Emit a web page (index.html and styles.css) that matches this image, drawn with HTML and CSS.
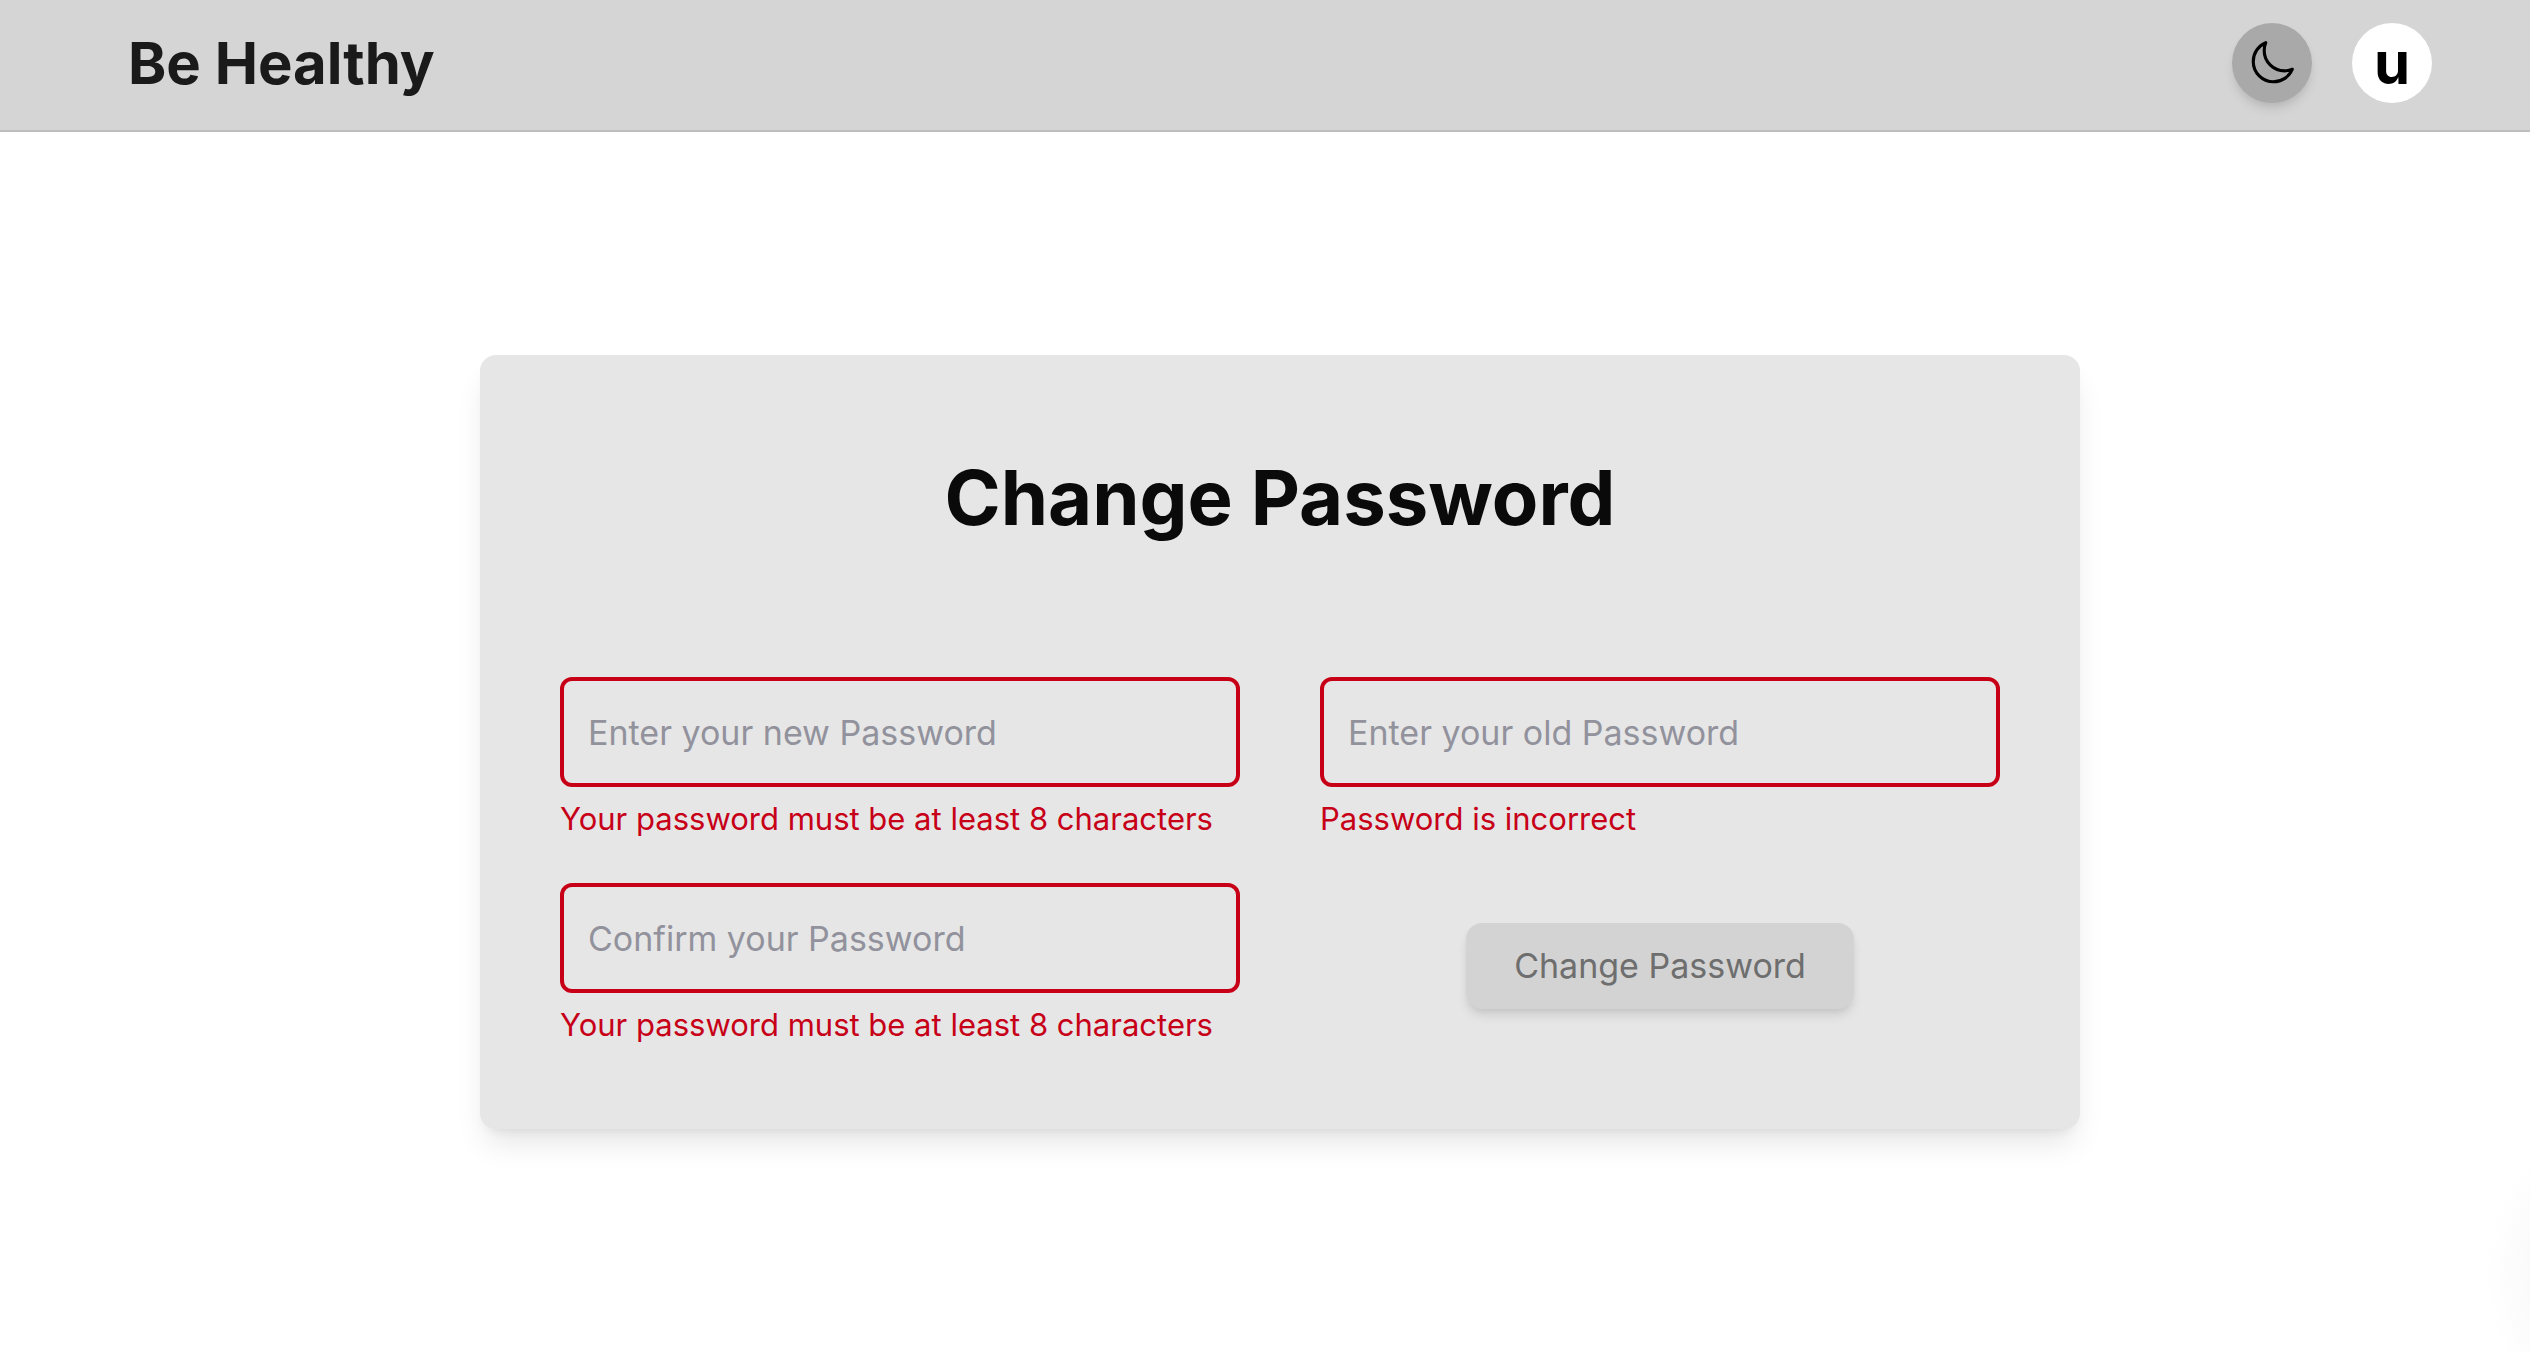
FILE: index.html
```html
<!DOCTYPE html>
<html lang="en">
<head>
    <meta charset="UTF-8">
    <meta name="viewport" content="width=device-width, initial-scale=1.0">
    <title>Change Password | Be Healthy</title>
    <link rel="stylesheet" href="styles.css">
</head>
<body>
    <header class="navbar">
        <a class="brand" href="#">Be Healthy</a>
        <div class="nav-actions">
            <button class="theme-toggle" type="button" aria-label="Toggle dark mode">
                <svg viewBox="0 0 24 24" fill="none" stroke="currentColor" stroke-width="1.5" stroke-linecap="round" stroke-linejoin="round">
                    <path d="M21.752 15.002A9.72 9.72 0 0 1 18 15.75c-5.385 0-9.75-4.365-9.75-9.75 0-1.33.266-2.597.748-3.752A9.753 9.753 0 0 0 3 11.25C3 16.635 7.365 21 12.75 21a9.753 9.753 0 0 0 9.002-5.998Z"/>
                </svg>
            </button>
            <button class="avatar" type="button">u</button>
        </div>
    </header>

    <main class="main-content">
        <form class="card">
            <h1>Change Password</h1>
            <div class="form-grid">
                <div class="field">
                    <input type="password" id="new-password" placeholder="Enter your new Password" aria-label="New password">
                    <label class="error" for="new-password">Your password must be at least 8 characters</label>
                </div>
                <div class="field">
                    <input type="password" id="old-password" placeholder="Enter your old Password" aria-label="Old password">
                    <label class="error" for="old-password">Password is incorrect</label>
                </div>
                <div class="field">
                    <input type="password" id="confirm-password" placeholder="Confirm your Password" aria-label="Confirm password">
                    <label class="error" for="confirm-password">Your password must be at least 8 characters</label>
                </div>
                <button class="submit" type="submit" disabled>Change Password</button>
            </div>
        </form>
    </main>
</body>
</html>
```
FILE: styles.css
```css
:root {
    --navbar: #d5d5d5;
    --navbar-border: #bebebe;
    --card: #e6e6e6;
    --error: #c70018;
    --placeholder: #92929d;
}

* {
    box-sizing: border-box;
}

body {
    font-family: Inter, sans-serif;
    margin: 0;
    min-height: 100vh;
    display: flex;
    flex-direction: column;
    background: radial-gradient(circle at calc(100% + 132px) calc(100% - 77px), #fafafa 130px, #fff 176px);
}

button,
input {
    font-family: inherit;
}

.navbar {
    display: flex;
    justify-content: space-between;
    align-items: center;
    padding: 23px 98px 27px 128px;
    background-color: var(--navbar);
    border-bottom: 2px solid var(--navbar-border);
}

.brand {
    font-size: 58px;
    line-height: 80px;
    font-weight: 700;
    color: #1a1a1a;
    text-decoration: none;
}

.nav-actions {
    display: flex;
    gap: 40px;
}

.theme-toggle,
.avatar {
    width: 80px;
    height: 80px;
    padding: 0;
    border: none;
    border-radius: 50%;
    display: flex;
    justify-content: center;
    align-items: center;
    color: #000;
    cursor: pointer;
}

.theme-toggle {
    background-color: #a9a9a9;
    box-shadow: 0 8px 12px -2px rgba(0,0,0,0.1), 0 4px 8px -4px rgba(0,0,0,0.1);
}

.theme-toggle svg {
    width: 50px;
    height: 50px;
}

.avatar {
    background-color: #fff;
    font-size: 58px;
    line-height: 80px;
    font-weight: 700;
}

.main-content {
    flex: 1;
    display: flex;
    justify-content: center;
    align-items: center;
    padding: 40px 0 40px 30px;
}

.card {
    width: 100%;
    max-width: 1600px;
    padding: 80px;
    border-radius: 16px;
    background-color: var(--card);
    box-shadow: 0 20px 30px -6px rgba(0,0,0,0.1), 0 8px 12px -8px rgba(0,0,0,0.1);
}

.card h1 {
    margin: 0 0 118px;
    font-size: 76px;
    line-height: 124px;
    font-weight: 700;
    text-align: center;
    color: #0a0a0a;
}

.form-grid {
    display: grid;
    grid-template-columns: repeat(2, 1fr);
    gap: 40px 80px;
    align-items: center;
}

.field {
    display: flex;
    flex-direction: column;
    gap: 8px;
}

.field input {
    width: 100%;
    height: 110px;
    padding: 0 24px;
    border: 4px solid var(--error);
    border-radius: 12px;
    background: transparent;
    font-size: 34px;
    outline: none;
}

.field input::placeholder {
    color: var(--placeholder);
    opacity: 1;
}

.error {
    font-size: 31px;
    line-height: 48px;
    color: var(--error);
}

.submit {
    justify-self: center;
    padding: 16px 48px;
    border: none;
    border-radius: 16px;
    background-color: #d3d3d3;
    font-size: 34px;
    line-height: 54px;
    color: #6e6e6e;
    box-shadow: 0 8px 12px -2px rgba(0,0,0,0.1), 0 4px 8px -4px rgba(0,0,0,0.1);
}
```
